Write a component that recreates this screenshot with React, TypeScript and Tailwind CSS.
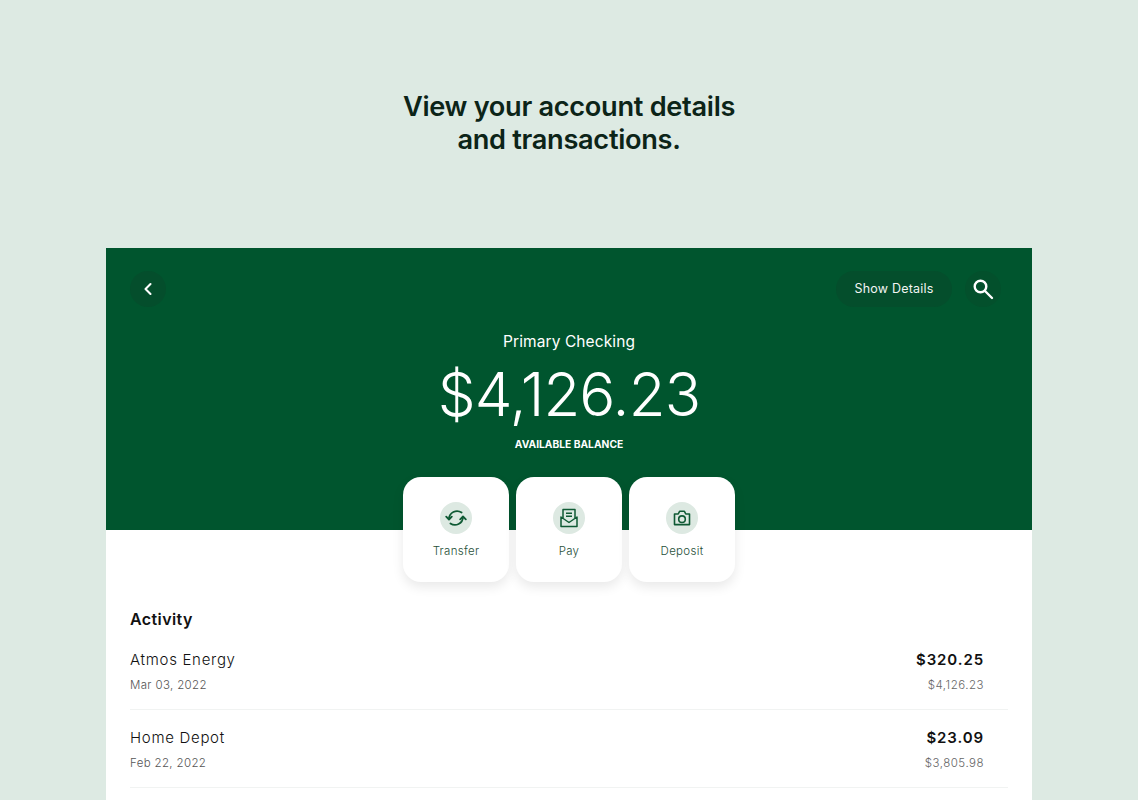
import { ChevronLeft } from "lucide-react";
import type { ReactNode } from "react";

const font = "font-['Inter','Liberation_Sans',sans-serif]";

function TransferIcon() {
  return (
    <svg width="22" height="22" viewBox="0 0 22 22" fill="none" stroke="#0f5a34" strokeWidth="1.8" strokeLinecap="round" strokeLinejoin="round">
      <path d="M16.6 5.6A8 8 0 0 0 4 12" />
      <path d="M5.4 16.4A8 8 0 0 0 18 10" />
      <path d="M1.2 9.6L4 12.5l2.8-2.9" />
      <path d="M15.2 12.4L18 9.5l2.8 2.9" />
    </svg>
  );
}

function PayIcon() {
  return (
    <svg width="18" height="20" viewBox="0 0 18 20" fill="none" stroke="#0f5a34" strokeWidth="1.5" strokeLinejoin="round">
      <path d="M3 10V1.5h12V10" />
      <path d="M1 9v9.5h16V9l-8 5.5z" />
      <path d="M6 5.2h6M6 8.2h6" />
    </svg>
  );
}

function CameraIcon() {
  return (
    <svg width="18" height="16" viewBox="0 0 18 16" fill="none" stroke="#0f5a34" strokeWidth="1.6" strokeLinejoin="round">
      <path d="M1.5 4h3.7l1.4-2.7h4.8L12.8 4h3.7v10.6h-15z" />
      <circle cx="9" cy="9.2" r="3.3" />
    </svg>
  );
}

function SearchIcon() {
  return (
    <svg width="22" height="22" viewBox="0 0 22 22" fill="none" stroke="white" strokeWidth="2.4" strokeLinecap="round">
      <circle cx="8.5" cy="8.5" r="5.8" />
      <path d="M13 13l7 7" />
    </svg>
  );
}

function ActionCard({ label, icon }: { label: string; icon: ReactNode }) {
  return (
    <div className="flex h-[105px] w-[106px] flex-col items-center rounded-[18px] bg-white pt-[25px] shadow-[0_5px_12px_rgba(0,0,0,0.09)]">
      <div className="flex h-8 w-8 items-center justify-center rounded-full bg-[#dde9e2]">{icon}</div>
      <span className="mt-[9px] text-[11.5px] leading-4 font-light tracking-[0.3px] text-[#1f4f38]">{label}</span>
    </div>
  );
}

function Transaction({ name, date, amount, balance }: { name: string; date: string; amount: string; balance: string }) {
  return (
    <div className="flex h-[78px] items-start justify-between border-b border-[#f1f3f2] pt-[18px] pr-[24px]">
      <div>
        <div className="text-[15px] leading-5 font-light tracking-[0.7px] text-[#111]">{name}</div>
        <div className="mt-[7px] text-[11.5px] leading-4 font-light tracking-[0.35px] text-[#555]">{date}</div>
      </div>
      <div className="text-right">
        <div className="text-[15px] leading-5 font-semibold tracking-[0.9px] text-[#111]">{amount}</div>
        <div className="mt-[7px] text-[11.5px] leading-4 font-light tracking-[0.5px] text-[#666]">{balance}</div>
      </div>
    </div>
  );
}

export default function App() {
  return (
    <div className={`h-[800px] overflow-hidden bg-[#ddeae3] ${font}`}>
      <h1 className="pt-[90px] text-center text-[27.2px] leading-[33px] font-semibold tracking-[-0.3px] text-[#0c2418]">
        View your account details
        <br />
        and transactions.
      </h1>

      <div className="mx-[106px] mt-[92px] bg-white pb-10">
        <div className="h-[282px] bg-[#00552e] px-6 pt-[23px]">
          <div className="flex items-center justify-between pr-[7px]">
            <button className="flex h-9 w-9 items-center justify-center rounded-full bg-[#044e2c]">
              <ChevronLeft size={20} color="white" strokeWidth={2.5} />
            </button>
            <div className="flex items-center gap-[13px]">
              <span className="flex h-9 w-[116px] items-center justify-center rounded-full bg-[#044e2c] text-[12.5px] tracking-[0.2px] text-[#f2f5f3]">
                Show Details
              </span>
              <span className="flex h-9 w-9 items-center justify-center rounded-full bg-[#03502c]">
                <SearchIcon />
              </span>
            </div>
          </div>
          <div className="mt-[25px] text-center">
            <div className="text-[15.5px] leading-5 font-normal tracking-[0.1px] text-white">Primary Checking</div>
            <div className="mt-[6px] text-[60px] leading-[72px] font-[280] tracking-[-0.85px] text-white">$4,126.23</div>
            <div className="mt-[8px] text-[10.25px] leading-3 font-bold text-white">AVAILABLE BALANCE</div>
          </div>
        </div>

        <div className="-mt-[53px] flex justify-center gap-[7px]">
          <ActionCard label="Transfer" icon={<TransferIcon />} />
          <ActionCard label="Pay" icon={<PayIcon />} />
          <ActionCard label="Deposit" icon={<CameraIcon />} />
        </div>

        <div className="pr-6 pl-6">
          <div className="mt-[27px] text-[16px] leading-5 font-semibold tracking-[0.4px] text-[#111]">Activity</div>
          <div className="mt-[3px]">
            <Transaction name="Atmos Energy" date="Mar 03, 2022" amount="$320.25" balance="$4,126.23" />
            <Transaction name="Home Depot" date="Feb 22, 2022" amount="$23.09" balance="$3,805.98" />
          </div>
        </div>
      </div>
    </div>
  );
}
